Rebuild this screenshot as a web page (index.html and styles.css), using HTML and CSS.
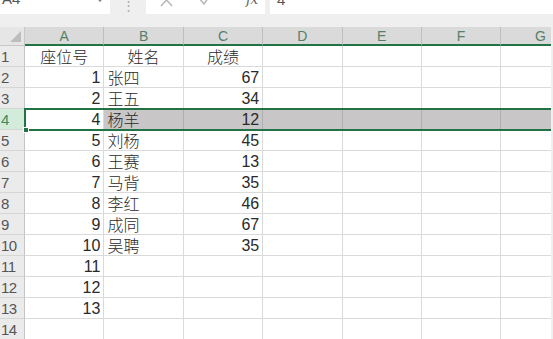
FILE: index.html
```html
<!DOCTYPE html>
<html lang="zh">
<head>
<meta charset="utf-8">
<title>Sheet</title>
<link rel="stylesheet" href="styles.css">
</head>
<body>
<div class="app">
  <div class="fbar">
    <div class="namebox"><span class="nb-text">A4</span><span class="caret"></span></div>
    <div class="dots">⋮</div>
    <div class="fxbox">
      <svg class="ico" width="14" height="8" viewBox="0 0 14 8"><path d="M1 -6 L12 6 M12 -6 L1 6" stroke="#b9b9b9" stroke-width="1.6" fill="none"/></svg>
      <svg class="ico" width="14" height="8" viewBox="0 0 14 8"><path d="M0 -3 L6 4 L13 -6" stroke="#b9b9b9" stroke-width="1.6" fill="none"/></svg>
      <span class="fx">fx</span>
    </div>
    <div class="formula"><span class="f-text">4</span></div>
  </div>
  <div class="sheet">
    <div class="grid">
      <div class="corner"><span class="tri"></span></div>
      <div class="ch">A</div><div class="ch">B</div><div class="ch">C</div><div class="ch">D</div><div class="ch">E</div><div class="ch">F</div><div class="ch">G</div>

      <div class="rh">1</div><div class="c ctr">座位号</div><div class="c ctr">姓名</div><div class="c ctr">成绩</div><div class="c"></div><div class="c"></div><div class="c"></div><div class="c"></div>
      <div class="rh">2</div><div class="c num">1</div><div class="c">张四</div><div class="c num">67</div><div class="c"></div><div class="c"></div><div class="c"></div><div class="c"></div>
      <div class="rh">3</div><div class="c num">2</div><div class="c">王五</div><div class="c num">34</div><div class="c"></div><div class="c"></div><div class="c"></div><div class="c"></div>
      <div class="rh rh-sel">4</div><div class="c num active">4</div><div class="c sel">杨羊</div><div class="c num sel">12</div><div class="c sel"></div><div class="c sel"></div><div class="c sel"></div><div class="c sel"></div>
      <div class="rh">5</div><div class="c num">5</div><div class="c">刘杨</div><div class="c num">45</div><div class="c"></div><div class="c"></div><div class="c"></div><div class="c"></div>
      <div class="rh">6</div><div class="c num">6</div><div class="c">王赛</div><div class="c num">13</div><div class="c"></div><div class="c"></div><div class="c"></div><div class="c"></div>
      <div class="rh">7</div><div class="c num">7</div><div class="c">马背</div><div class="c num">35</div><div class="c"></div><div class="c"></div><div class="c"></div><div class="c"></div>
      <div class="rh">8</div><div class="c num">8</div><div class="c">李红</div><div class="c num">46</div><div class="c"></div><div class="c"></div><div class="c"></div><div class="c"></div>
      <div class="rh">9</div><div class="c num">9</div><div class="c">成同</div><div class="c num">67</div><div class="c"></div><div class="c"></div><div class="c"></div><div class="c"></div>
      <div class="rh">10</div><div class="c num">10</div><div class="c">吴聘</div><div class="c num">35</div><div class="c"></div><div class="c"></div><div class="c"></div><div class="c"></div>
      <div class="rh">11</div><div class="c num">11</div><div class="c"></div><div class="c"></div><div class="c"></div><div class="c"></div><div class="c"></div><div class="c"></div>
      <div class="rh">12</div><div class="c num">12</div><div class="c"></div><div class="c"></div><div class="c"></div><div class="c"></div><div class="c"></div><div class="c"></div>
      <div class="rh">13</div><div class="c num">13</div><div class="c"></div><div class="c"></div><div class="c"></div><div class="c"></div><div class="c"></div><div class="c"></div>
      <div class="rh">14</div><div class="c"></div><div class="c"></div><div class="c"></div><div class="c"></div><div class="c"></div><div class="c"></div><div class="c"></div>
    </div>
    <div class="selbox"><span class="handle"></span></div>
  </div>
</div>
</body>
</html>
```

FILE: styles.css
```css
* { box-sizing: border-box; }
html, body { margin: 0; padding: 0; background: #ffffff; }
body {
  width: 553px;
  height: 339px;
  overflow: hidden;
  font-family: "Noto Sans CJK SC", "Noto Sans", sans-serif;
}
.app {
  width: 553px;
  height: 339px;
  background: #efefef;
  display: flex;
  flex-direction: column;
}
.fbar {
  height: 27px;
  display: flex;
  align-items: flex-start;
  background: #efefef;
}
.namebox {
  width: 110px;
  height: 14px;
  background: #fff;
  overflow: hidden;
  position: relative;
  display: flex;
}
.nb-text {
  display: block;
  font-family: "Liberation Sans", sans-serif;
  font-size: 15px;
  line-height: 16px;
  margin-top: -9px;
  margin-left: 2px;
  color: #555;
}
.caret {
  position: absolute;
  right: 8px;
  top: -3px;
  width: 4px;
  height: 4px;
  border-right: 1px solid #777;
  border-bottom: 1px solid #777;
  transform: rotate(45deg);
}
.dots {
  width: 36px;
  height: 14px;
  text-align: center;
  font-size: 13px;
  line-height: 10px;
  color: #aaa;
  overflow: hidden;
}
.fxbox {
  width: 119px;
  height: 14px;
  background: #fff;
  display: flex;
  align-items: flex-start;
  overflow: hidden;
  padding-left: 14px;
  gap: 24px;
}
.ico { display: block; }
.fx {
  display: block;
  font-family: "DejaVu Serif", serif;
  font-style: italic;
  font-size: 14px;
  line-height: 14px;
  margin-top: -8px;
  margin-left: 10px;
  color: #666;
  letter-spacing: -1px;
}
.formula {
  margin-left: 5px;
  flex: 1;
  height: 14px;
  background: #fff;
  overflow: hidden;
}
.f-text {
  display: block;
  font-family: "Liberation Sans", sans-serif;
  font-size: 15px;
  line-height: 16px;
  margin-top: -8px;
  margin-left: 7px;
  color: #555;
}
.sheet {
  position: relative;
  width: 551px;
  height: 312px;
  overflow: hidden;
  background: #fff;
}
.grid {
  display: grid;
  grid-template-columns: 25px repeat(7, 79.4px);
  grid-template-rows: 19px;
  grid-auto-rows: 21px;
  width: 580px;
}
.corner {
  background: #e6e6e6;
  border-right: 1px solid #c8c8c8;
  border-bottom: 1px solid #c8c8c8;
  position: relative;
}
.tri {
  position: absolute;
  right: 3px;
  bottom: 3px;
  width: 0;
  height: 0;
  border-left: 11px solid transparent;
  border-bottom: 11px solid #bdbdbd;
}
.ch {
  background: #dadada;
  border-right: 1px solid #bfbfbf;
  border-bottom: 2px solid #217346;
  text-align: center;
  font-family: "Liberation Sans", sans-serif;
  font-size: 14px;
  line-height: 19px;
  color: #55806a;
}
.rh {
  background: #ebebeb;
  border-right: 1px solid #c4c4c4;
  border-bottom: 1px solid #d6d6d6;
  font-family: "Liberation Sans", sans-serif;
  font-size: 15px;
  line-height: 21px;
  padding-left: 1px;
  color: #555;
  letter-spacing: -0.5px;
}
.rh-sel {
  background: #d3ebdb;
  color: #3f8a5c;
}
.c {
  border-right: 1px solid #dadada;
  border-bottom: 1px solid #dadada;
  font-size: 16px;
  font-weight: 300;
  line-height: 21px;
  padding: 0 3px;
  color: #2a2a2a;
  white-space: nowrap;
  overflow: hidden;
}
.num {
  text-align: right;
  font-family: "Liberation Sans", sans-serif;
  font-weight: 400;
  font-size: 16px;
}
.ctr { text-align: center; }
.sel {
  background: #c8c6c6;
  border-right-color: #aeaeae;
}
.active { background: #fff; }
.selbox {
  position: absolute;
  left: 24px;
  top: 81px;
  width: 540px;
  height: 23px;
  border: 2px solid #217346;
  pointer-events: none;
}
.handle {
  position: absolute;
  left: -3px;
  bottom: -4px;
  width: 6px;
  height: 6px;
  background: #217346;
  border: 1px solid #fff;
}
```
